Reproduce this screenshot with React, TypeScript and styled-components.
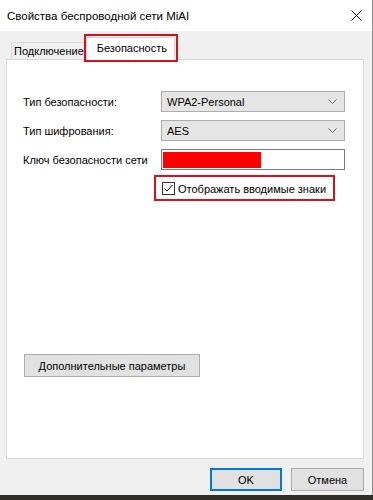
import React from 'react';
import styled, { createGlobalStyle } from 'styled-components';

const GlobalStyle = createGlobalStyle`
  *, *::before, *::after {
    box-sizing: border-box;
  }
  html, body {
    margin: 0;
    padding: 0;
    background: #2f2d26;
  }
  body {
    font-family: "Liberation Sans", Arial, sans-serif;
    font-size: 11px;
    color: #000;
  }
`;

const Desktop = styled.div`
  width: 373px;
  height: 500px;
  overflow: hidden;
  background: #2f2d26;
`;

const Window = styled.div`
  width: 373px;
  height: 495px;
  display: flex;
  flex-direction: column;
  background: #f0f0f0;
  border-right: 1px solid #8e8e8e;
`;

const TitleBar = styled.div`
  height: 31px;
  flex: none;
  display: flex;
  align-items: center;
  justify-content: space-between;
  padding: 0 10px 0 7px;
  background: #fff;
  font-size: 11.5px;
`;

const Body = styled.div`
  flex: 1;
  display: flex;
  flex-direction: column;
  padding: 6px 8px 0 6px;
`;

const TabStrip = styled.div`
  display: flex;
  align-items: flex-end;
  height: 22px;
  padding-left: 5px;
`;

const Tab = styled.div<{ active?: boolean }>`
  position: relative;
  display: flex;
  align-items: center;
  height: ${({ active }) => (active ? '23px' : '17px')};
  padding: ${({ active }) => (active ? '0 7px 2px 10px' : '0 2px')};
  margin: ${({ active }) => (active ? '0 0 -1px -1px' : '0')};
  background: ${({ active }) => (active ? '#fff' : '#f0f0f0')};
  border: 1px solid #d9d9d9;
  border-bottom: none;
  z-index: ${({ active }) => (active ? 1 : 0)};
  white-space: nowrap;

  ${({ active }) =>
    active &&
    `
    &::after {
      content: '';
      position: absolute;
      inset: -4px -4px -2px -3px;
      border: 2px solid #d3121c;
    }
  `}
`;

const Panel = styled.div`
  height: 400px;
  flex: none;
  display: flex;
  flex-direction: column;
  align-items: flex-start;
  background: #fff;
  border: 1px solid #d9d9d9;
  padding: 31px 17px 0 16px;
`;

const FormGrid = styled.div`
  display: grid;
  grid-template-columns: 138px 184px;
  row-gap: 8px;
  align-items: center;
`;

const Label = styled.div`
  white-space: nowrap;
`;

const Select = styled.div`
  height: 21px;
  display: flex;
  align-items: center;
  justify-content: space-between;
  padding: 0 7px 0 5px;
  background: #e5e5e5;
  border: 1px solid #acacac;
`;

const KeyInput = styled.div`
  height: 21px;
  display: flex;
  align-items: center;
  padding: 0 1px;
  background: #fff;
  border: 1px solid #7a7a7a;
`;

const Redacted = styled.span`
  width: 98px;
  height: 16px;
  background: #fe0000;
`;

const CheckRow = styled.label`
  grid-column: 2;
  position: relative;
  justify-self: start;
  display: inline-flex;
  align-items: center;
  gap: 3px;
  height: 21px;
  margin-left: 1px;
  white-space: nowrap;

  &::after {
    content: '';
    position: absolute;
    inset: -3px -9px -2px -8px;
    border: 2px solid #d3121c;
  }
`;

const CheckBox = styled.span`
  width: 13px;
  height: 13px;
  flex: none;
  display: flex;
  background: #fff;
  border: 1px solid #333;
`;

const PushButton = styled.button<{ primary?: boolean; w: number }>`
  width: ${({ w }) => w}px;
  height: 23px;
  margin: 0;
  padding: 0;
  font-family: inherit;
  font-size: 11px;
  color: #000;
  background: #e1e1e1;
  border: ${({ primary }) => (primary ? '2px solid #0078d7' : '1px solid #adadad')};
`;

const AdvancedButton = styled(PushButton)`
  margin: 155px 0 0 1px;
`;

const Footer = styled.div`
  display: flex;
  justify-content: flex-end;
  gap: 9px;
  padding-top: 9px;
`;

const Chevron = () => (
  <svg width="9" height="5" viewBox="0 0 9 5">
    <path d="M0.5 0.5 L4.5 4.5 L8.5 0.5" fill="none" stroke="#666" strokeWidth="1" />
  </svg>
);

const CloseIcon = () => (
  <svg width="11" height="11" viewBox="0 0 11 11">
    <path d="M0.5 0.5 L10.5 10.5 M10.5 0.5 L0.5 10.5" stroke="#000" strokeWidth="1" />
  </svg>
);

export default function App() {
  return (
    <Desktop>
      <GlobalStyle />
      <Window>
        <TitleBar>
          <span>Свойства беспроводной сети MiAI</span>
          <CloseIcon />
        </TitleBar>
        <Body>
          <TabStrip>
            <Tab>Подключение</Tab>
            <Tab active>Безопасность</Tab>
          </TabStrip>
          <Panel>
            <FormGrid>
              <Label>Тип безопасности:</Label>
              <Select>
                <span>WPA2-Personal</span>
                <Chevron />
              </Select>
              <Label>Тип шифрования:</Label>
              <Select>
                <span>AES</span>
                <Chevron />
              </Select>
              <Label>Ключ безопасности сети</Label>
              <KeyInput>
                <Redacted />
              </KeyInput>
              <CheckRow>
                <CheckBox>
                  <svg width="11" height="11" viewBox="0 0 11 11">
                    <path d="M1.5 5.5 L4 8 L9.5 2" fill="none" stroke="#000" strokeWidth="1" />
                  </svg>
                </CheckBox>
                Отображать вводимые знаки
              </CheckRow>
            </FormGrid>
            <AdvancedButton w={176}>Дополнительные параметры</AdvancedButton>
          </Panel>
          <Footer>
            <PushButton primary w={72}>OK</PushButton>
            <PushButton w={73}>Отмена</PushButton>
          </Footer>
        </Body>
      </Window>
    </Desktop>
  );
}
